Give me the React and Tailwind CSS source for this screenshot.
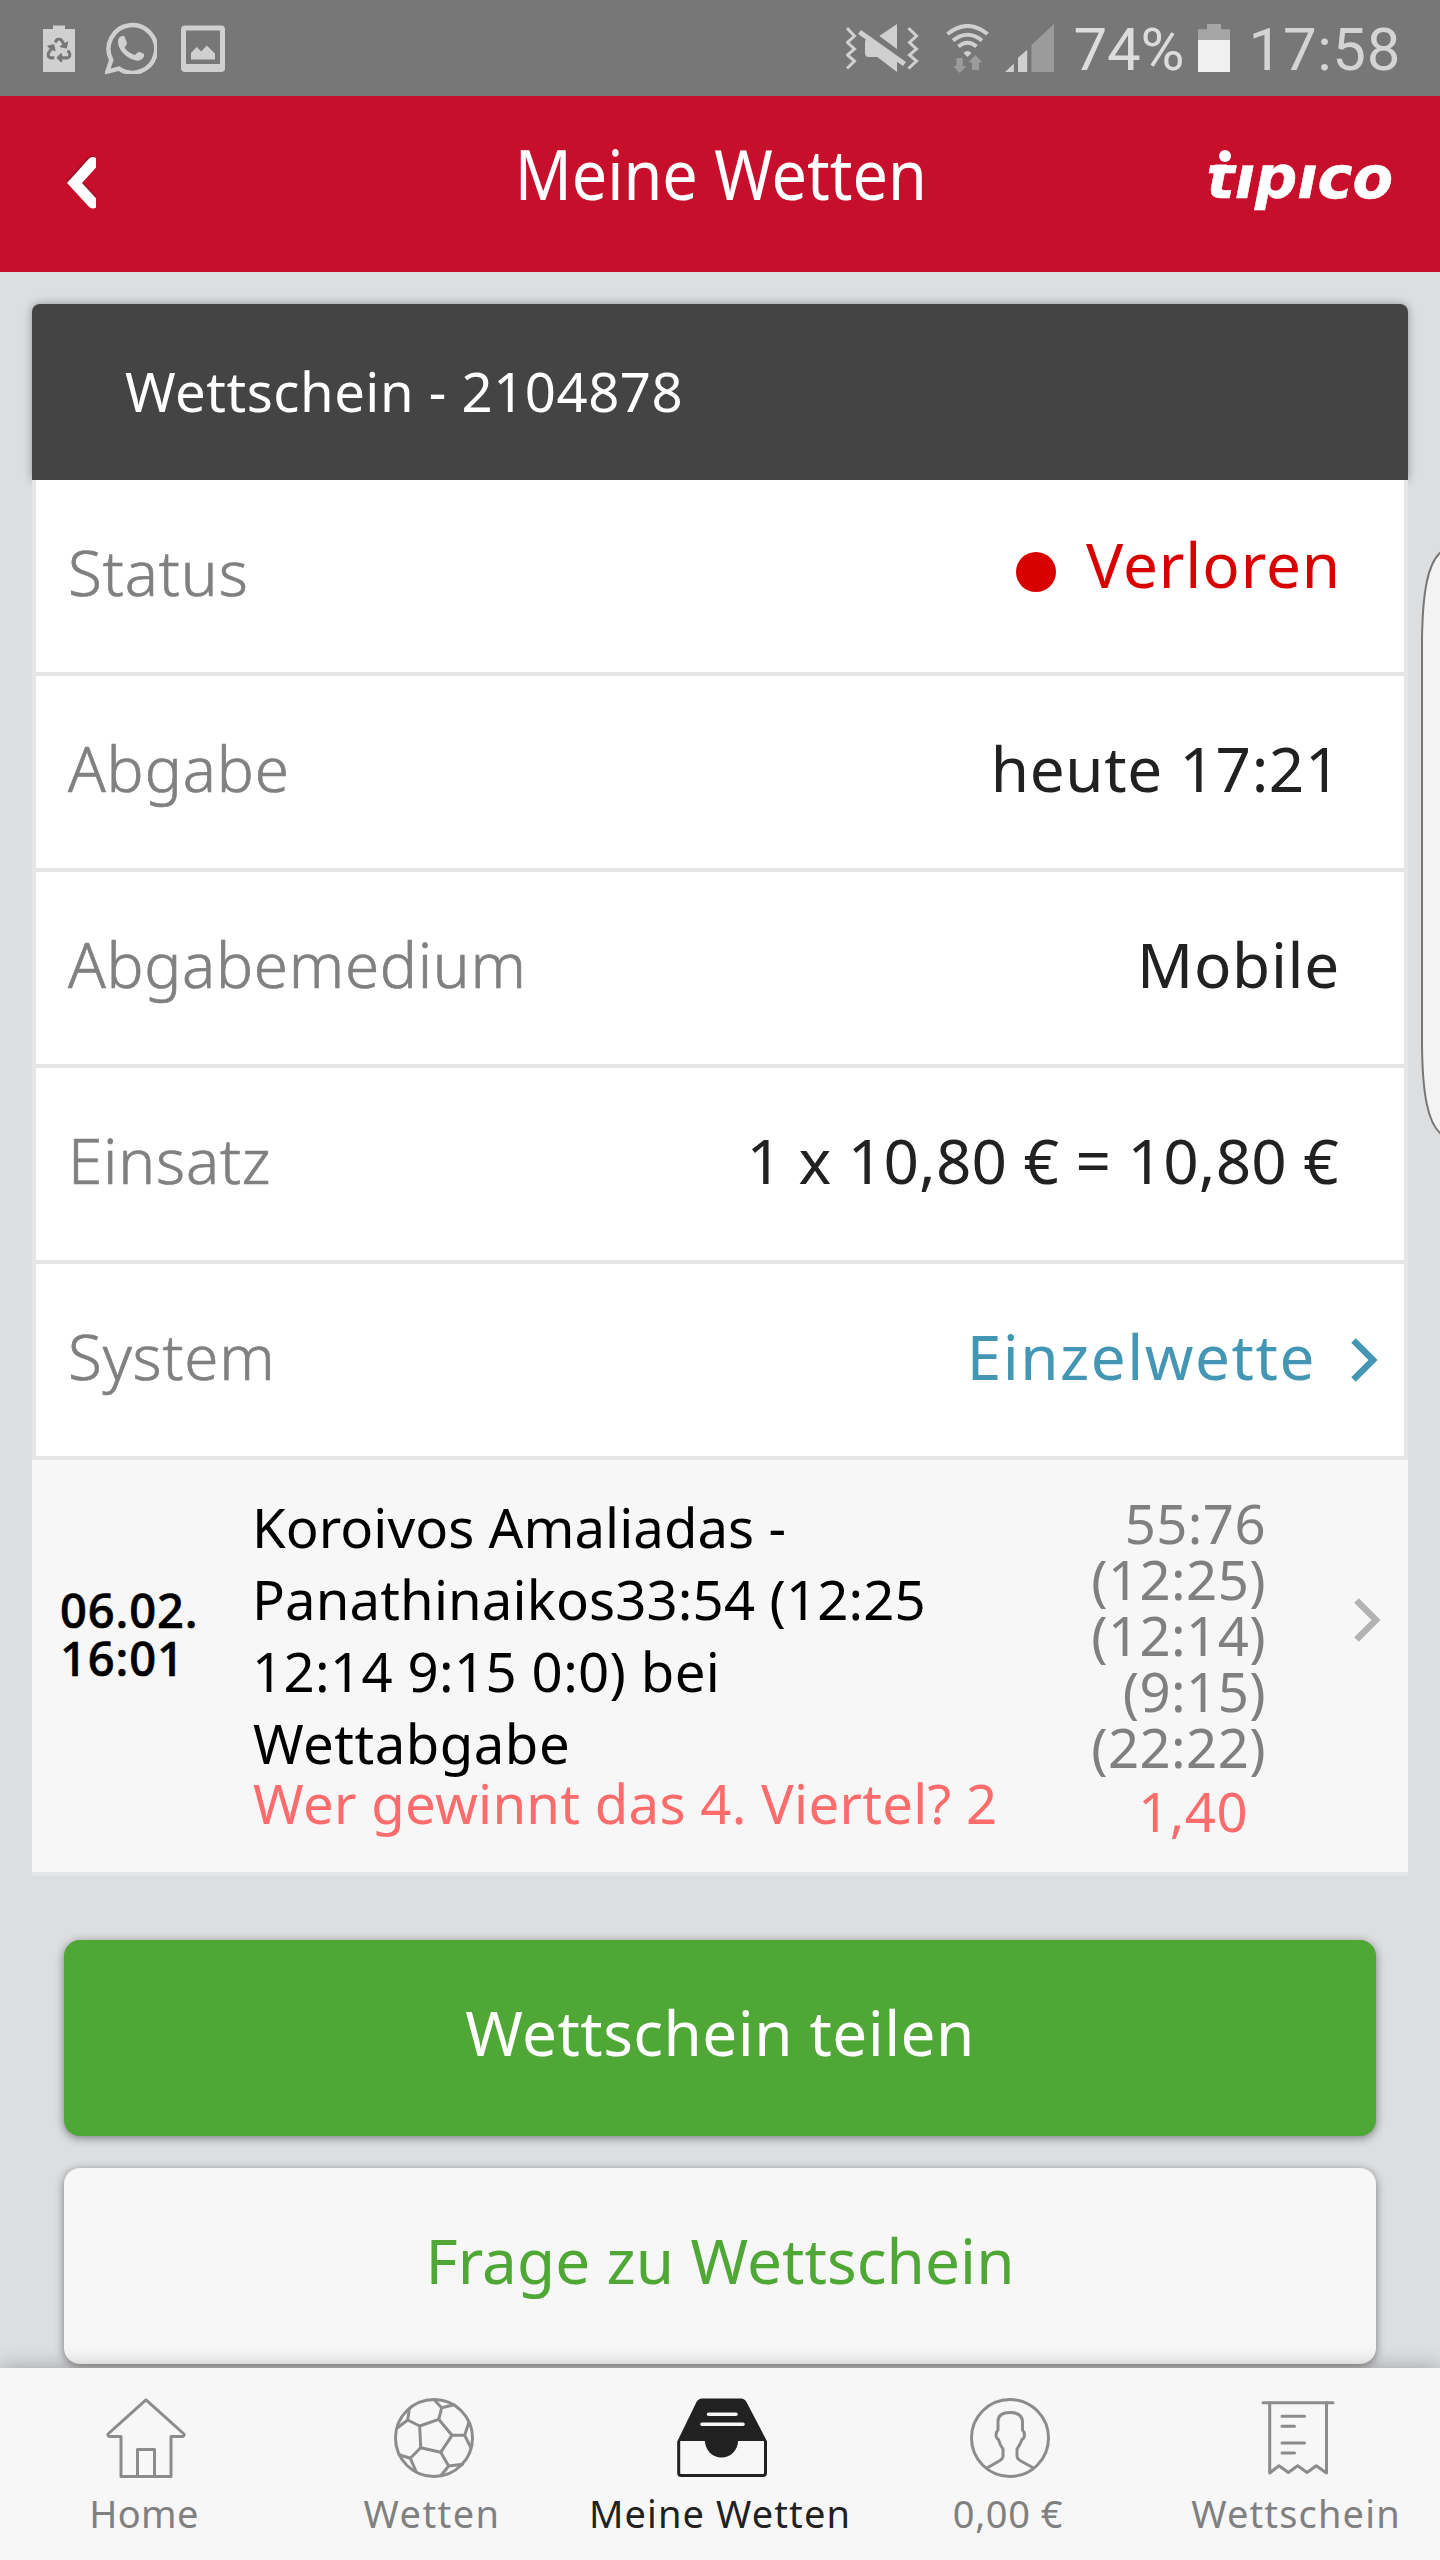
import React from "react";
import { FaRecycle } from "react-icons/fa";

/* ---------- Android status bar ---------- */

function BatterySaverIcon() {
  return (
    <svg className="h-[47px] w-8" viewBox="0 0 32 47">
      <path d="M0 4h10V0.5h12V4h10v43H0z" fill="#d0d0d0" />
      <FaRecycle x="3.5" y="12.5" size={25} color="#777777" />
    </svg>
  );
}

function ChatIcon() {
  return (
    <svg className="h-[52px] w-[52px]" viewBox="0 0 52 52">
      <path
        d="M2.3 49.6 L6.3 38 A23.8 23.8 0 1 1 14 46.6 Z"
        fill="none"
        stroke="#d0d0d0"
        strokeWidth="4.4"
      />
      <path
        d="M13 20 C13 15 17 13 19.5 14.5 L22 21 Q22 23 19.5 25.5 Q23 31 30 33 Q32.5 29.5 35 30 L39 32 C40 36 35 39.5 31 38.5 C22 37 13 28 13 20Z"
        fill="#d0d0d0"
      />
    </svg>
  );
}

function PictureIcon() {
  return (
    <svg className="h-[47px] w-11" viewBox="0 0 44 47">
      <path
        fillRule="evenodd"
        d="M4 0.5H40a4 4 0 0 1 4 4V43a4 4 0 0 1-4 4H4a4 4 0 0 1-4-4V4.500a4 4 0 0 1 4-4ZM5 5.500V39H39V5.500Z"
        fill="#d0d0d0"
      />
      <path d="M10 28 L15.700 22 L20.300 26.500 L25.700 20.500 L34 28.500 V34.500 H10Z" fill="#d0d0d0" />
    </svg>
  );
}

function MuteIcon() {
  return (
    <svg className="h-12 w-[73px]" viewBox="0 0 73 48">
      <g fill="none" stroke="#d0d0d0" strokeWidth="3">
        <path d="M1 4 L8.500 12 L1.500 18.500 L8.500 25 L1.500 31 L8.500 37 L1 44.500" />
        <path d="M62.500 4 L70.500 12 L63.500 18.500 L70.500 25 L63.500 31 L70.500 37 L62.500 44.500" />
        <path d="M13.500 8 L58.500 40" strokeWidth="5" />
      </g>
      <path d="M33.300 12 L51 0 V25Z M21 14.500 Q19 15.500 19 18 V29 Q19 33 23 33 H31.300 L51 48 V37Z" fill="#d0d0d0" />
    </svg>
  );
}

function WifiIcon() {
  return (
    <svg className="h-[49px] w-[43px]" viewBox="0 0 43 49">
      <g fill="none" stroke="#d0d0d0" strokeWidth="4">
        <path d="M1.500 10 Q21.500 -6 41.500 10" />
        <path d="M7 16.500 Q21.500 5 36 16.500" />
        <path d="M12.500 22.500 Q21.500 15 30.500 22.500" />
      </g>
      <path d="M17.500 29 Q21.500 25 25.500 29 L21.500 33Z" fill="#d0d0d0" />
      <path d="M10.400 34h6.300v8h4L13.600 49 7 42h3.400z M29.400 31l7.100 7.500H33V46h-7v-7.500h-3.700z" fill="#9b9b9b" />
    </svg>
  );
}

function SignalIcon() {
  return (
    <svg className="h-12 w-[49px]" viewBox="0 0 49 48">
      <path d="M0 48 L8.800 39.700 V48Z M13 33.700 L22.200 25.700 V48 H13Z" fill="#d0d0d0" />
      <path d="M26.500 21 L49 0 V48 H26.500Z" fill="#9b9b9b" />
    </svg>
  );
}

function BatteryIcon() {
  return (
    <svg className="h-12 w-8" viewBox="0 0 32 48">
      <path d="M0 5.300h9V0h14v5.300h9V17H0z" fill="#a6a6a6" />
      <path d="M0 16h32v32H0z" fill="#f0f0f0" />
    </svg>
  );
}

function StatusBar() {
  return (
    <div className="flex h-24 shrink-0 items-center bg-[#777777] pr-[39px] pl-[43px] font-['Roboto',sans-serif] text-[60px] leading-none text-[#d4d4d4]">
      <BatterySaverIcon />
      <span className="ml-[30px]"><ChatIcon /></span>
      <span className="ml-6"><PictureIcon /></span>
      <span className="ml-auto"><MuteIcon /></span>
      <span className="ml-[27px]"><WifiIcon /></span>
      <span className="ml-4"><SignalIcon /></span>
      <span className="ml-5 w-[109px] pt-1 tracking-[-0.2px] whitespace-nowrap text-[#dcdcdc]">74%</span>
      <span className="ml-[15px]"><BatteryIcon /></span>
      <span className="ml-[19px] pt-1 tracking-[0.6px]">17:58</span>
    </div>
  );
}

/* ---------- App header ---------- */

function BackIcon() {
  return (
    <svg className="mb-1 h-[54px] w-[31px] overflow-hidden" viewBox="0 0 31 54">
      <path d="M27.500 6.500 L8.800 26 L27.500 46" fill="none" stroke="#a01029" strokeWidth="12" strokeLinecap="round" />
      <path d="M28 7.500 L9.500 28 L28 48" fill="none" stroke="#ffffff" strokeWidth="11" strokeLinecap="round" />
    </svg>
  );
}

function Logo() {
  return (
    <div
      aria-label="tipico"
      className="relative h-[59px] font-['DejaVu_Sans',sans-serif] text-[59px] leading-none font-bold whitespace-nowrap italic [-webkit-text-stroke:0.6px_white]"
    >
      <span className="inline-block [clip-path:inset(17px_-6px_-6px_-6px)]">t</span>ıpıco
      <span className="absolute top-[2px] left-[12px] size-3 rounded-full bg-white" />
    </div>
  );
}

function Header() {
  return (
    <header className="grid h-44 shrink-0 grid-cols-[1fr_auto_1fr] items-center bg-[#c70f2c] pr-[47px] pl-[65px] text-white">
      <BackIcon />
      <h1 className="scale-x-[0.912] pr-[18px] pb-[21px] text-[69px] leading-none">Meine Wetten</h1>
      <div className="justify-self-end pb-[14px]"><Logo /></div>
    </header>
  );
}

/* ---------- Bet slip ---------- */

function Chevron({ className }) {
  return (
    <svg className={className} viewBox="0 0 27 44" fill="none" stroke="currentColor" strokeWidth="6.500">
      <path d="M2.500 2.500 L22 22 L2.500 41.500" />
    </svg>
  );
}

function Row({ label, labelClass, children }) {
  return (
    <div className="flex h-[196px] items-center justify-between border-b-4 border-[#e5e6e8] bg-white pb-2 pl-8 text-[62px] leading-none text-[#212121]">
      <span className={"font-light text-[#808080] [-webkit-text-stroke:0.7px_#808080] " + labelClass}>{label}</span>
      {children}
    </div>
  );
}

function BetRow() {
  const scores = ["55:76", "(12:25)", "(12:14)", "(9:15)", "(22:22)"];
  return (
    <div className="flex h-[416px] items-start border-b-4 border-[#e5e6e8] bg-[#f7f7f7] text-[54.5px]">
      <div className="w-[219px] pt-[126px] pl-7 text-[47px] leading-[48px] font-medium tracking-[0.9px] text-black [-webkit-text-stroke:0.7px_black]">
        <div>06.02.</div>
        <div>16:01</div>
      </div>
      <div className="w-[780px] pt-[31px] whitespace-nowrap">
        <div className="leading-[72px] text-black">
          <div className="pl-px tracking-[0.05px]">Koroivos Amaliadas -</div>
          <div className="pl-px tracking-[0.12px]">Panathinaikos33:54 (12:25</div>
          <div className="pl-px tracking-[0.35px]">12:14 9:15 0:0) bei</div>
          <div className="pl-[2px] tracking-[0.5px]">Wettabgabe</div>
        </div>
        <div className="pl-[2px] leading-[48px] tracking-[0.29px] text-[#fd6c6c]">Wer gewinnt das 4. Viertel? 2</div>
      </div>
      <div className="w-[235px] pt-[35px] text-right leading-[56px] tracking-[0.4px] text-[#808080]">
        {scores.map((s) => (
          <div key={s}>{s}</div>
        ))}
        <div className="mt-2 pr-[18px] text-[#fd6c6c]">1,40</div>
      </div>
      <Chevron className="mt-[138px] ml-[88px] h-11 w-[27px] text-[#b3b3b3]" />
    </div>
  );
}

function BetSlip() {
  return (
    <section>
      <div className="flex h-44 items-center rounded-t-lg bg-[#444444] pb-[2px] pl-[93px] text-[54.5px] leading-none tracking-[0.5px] text-white shadow-[0_0_10px_rgba(0,0,0,0.35)]">
        Wettschein - 2104878
      </div>
      <div className="relative">
        <div className="border-x-4 border-[#e5e6e8]">
          <Row label="Status" labelClass="tracking-[0.9px]">
            <span className="mr-[63px] flex items-center pb-4 tracking-[0.9px] text-[#d90000]">
              <span className="mt-4 mr-[30px] size-10 rounded-full bg-[#d90000]" />
              Verloren
            </span>
          </Row>
          <Row label="Abgabe" labelClass="tracking-[0.9px]">
            <span className="mr-[63px] tracking-[0.6px]">heute 17:21</span>
          </Row>
          <Row label="Abgabemedium" labelClass="tracking-[0.7px]">
            <span className="mr-16 tracking-[0.7px]">Mobile</span>
          </Row>
          <Row label="Einsatz" labelClass="tracking-[0.8px]">
            <span className="mr-[65px] tracking-[0.2px]">1 x 10,80 € = 10,80 €</span>
          </Row>
          <Row label="System" labelClass="tracking-[0.8px]">
            <span className="mr-[26px] flex items-center tracking-[1.55px] text-[#4396b4]">
              Einzelwette
              <Chevron className="mt-2 ml-[35px] h-11 w-[27px]" />
            </span>
          </Row>
        </div>
        <BetRow />
      </div>
    </section>
  );
}

/* ---------- Bottom navigation ---------- */

const lineIcon = { fill: "none", stroke: "#8c8c8c", strokeWidth: 3, strokeLinejoin: "round", strokeLinecap: "round" };

function HomeIcon() {
  return (
    <svg className="h-20 w-20" viewBox="0 0 80 80" {...lineIcon}>
      <path d="M40 1.800 L78 36 Q78.500 38.500 76 38.500 H65 V78.500 H15 V38.500 H4 Q1.500 38.500 2 36Z" />
      <path d="M31.500 78.500 V51.500 H48.500 V78.500" />
    </svg>
  );
}

function BallIcon() {
  return (
    <svg className="h-20 w-20" viewBox="0 0 80 80" {...lineIcon}>
      <circle cx="40" cy="40" r="38.500" />
      <path d="M25.700 28 L44.700 21.300 L58 37.300 L46.700 54.300 L26.700 49.700Z" />
      <path d="M44.700 21.300 L47.700 9.700 L40.300 2 M47.700 9.700 L60 6.700" />
      <path d="M58 37.300 H70.700 L74.700 24.700 M70.700 37.300 L76.700 49.300" />
      <path d="M46.700 54.300 L54.700 68 L46.700 77.700 M54.700 68 L68.700 66.300" />
      <path d="M26.700 49.700 L16.300 60.300 L5 56.700 M16.300 60.300 L22.300 74" />
      <path d="M25.700 28 L13.700 22 L3.500 29.700 M13.700 22 L15.300 11" />
    </svg>
  );
}

function InboxIcon() {
  return (
    <svg className="h-20 w-[92px]" viewBox="0 0 92 80">
      <path
        d="M2.700 43 V75 Q2.700 77.500 5.200 77.500 H87 Q89.500 77.500 89.500 75 V43"
        fill="none"
        stroke="#212121"
        strokeWidth="3"
      />
      <path d="M1.500 43 L20.500 4 Q22.500 0.500 26 0.500 H65 Q68.500 0.500 70.500 4 L90.800 43 H62 A16.500 16.500 0 0 1 29 43Z" fill="#212121" />
      <path d="M32.500 16.300 H60 M26 26.300 H67" stroke="#f7f7f7" strokeWidth="3.600" strokeLinecap="round" />
    </svg>
  );
}

function PersonIcon() {
  return (
    <svg className="h-20 w-20" viewBox="0 0 80 80" {...lineIcon}>
      <circle cx="40" cy="40" r="38.500" />
      <path d="M17 70 L30 62.500 Q33 60.500 33 58 V51 Q29.500 46 28.500 41.500 Q26 40 26 37 Q26 34 28 32 V23 Q28.500 14.500 40 14.500 Q51.500 14.500 52.500 23 V32 Q54.500 34 54.500 37 Q54.500 40 52 41.500 Q50.500 46 47 51 V58 Q47 60.500 50 62.500 L63.500 70" />
    </svg>
  );
}

function SlipIcon() {
  return (
    <svg className="h-20 w-[74px]" viewBox="0 -2 74 80" {...lineIcon}>
      <path d="M2 2.700 H72" />
      <path d="M8.700 2.700 V73 L18 65.700 L27.300 72.500 L36.700 65.700 L46 72.500 L55.300 65.700 L65.500 73 V2.700" />
      <path d="M21 16.300 H43.500 M21 26.300 H33.500 M21 43 H43.500 M21 53 H33.500" />
    </svg>
  );
}

const tabs = [
  { label: "Home", Icon: HomeIcon, cls: "text-[#808080] tracking-[0.3px]" },
  { label: "Wetten", Icon: BallIcon, cls: "text-[#808080] tracking-[1.4px]" },
  { label: "Meine Wetten", Icon: InboxIcon, cls: "text-[#212121] tracking-[1.1px]" },
  { label: "0,00 €", Icon: PersonIcon, cls: "text-[#808080] tracking-[0.55px]" },
  { label: "Wettschein", Icon: SlipIcon, cls: "text-[#808080] tracking-[1.15px]" },
];

function BottomNav() {
  return (
    <nav className="relative grid h-48 shrink-0 grid-cols-5 bg-[#f7f7f7] shadow-[0_0_20px_rgba(0,0,0,0.3)]">
      {tabs.map(({ label, Icon, cls }) => (
        <div key={label} className="flex flex-col items-center pt-[30px]">
          <span className="pl-1"><Icon /></span>
          <span className={"mt-[11px] text-[38px] leading-[48px] whitespace-nowrap " + cls}>{label}</span>
        </div>
      ))}
    </nav>
  );
}

/* ---------- Edge panel handle ---------- */

function EdgeHandle() {
  return (
    <svg className="absolute top-[551px] right-0 h-[584px] w-5" viewBox="0 0 20 584">
      <path d="M21 1 C8 12 2.500 40 2 90 V494 C2.500 544 8 572 21 583" fill="#f3f3f3" stroke="#777777" strokeWidth="2" />
    </svg>
  );
}

export default function App() {
  return (
    <div className="relative flex h-[2560px] w-[1440px] flex-col overflow-hidden bg-[#dddee0] font-['Noto_Sans',sans-serif]">
      <StatusBar />
      <Header />
      <main className="min-h-0 flex-1 px-8 pt-8">
        <BetSlip />
        <div className="mt-16 flex flex-col gap-8 px-8 text-[62px] leading-none">
          <button className="h-[196px] rounded-2xl bg-[#4fa735] pb-3 tracking-[0.45px] text-white shadow-[0_2px_10px_rgba(0,0,0,0.45)]">
            Wettschein teilen
          </button>
          <button className="h-[196px] rounded-2xl bg-[#f7f7f7] pb-3 tracking-[0.1px] text-[#4fa735] shadow-[0_2px_10px_rgba(0,0,0,0.45)]">
            Frage zu Wettschein
          </button>
        </div>
      </main>
      <BottomNav />
      <EdgeHandle />
    </div>
  );
}
